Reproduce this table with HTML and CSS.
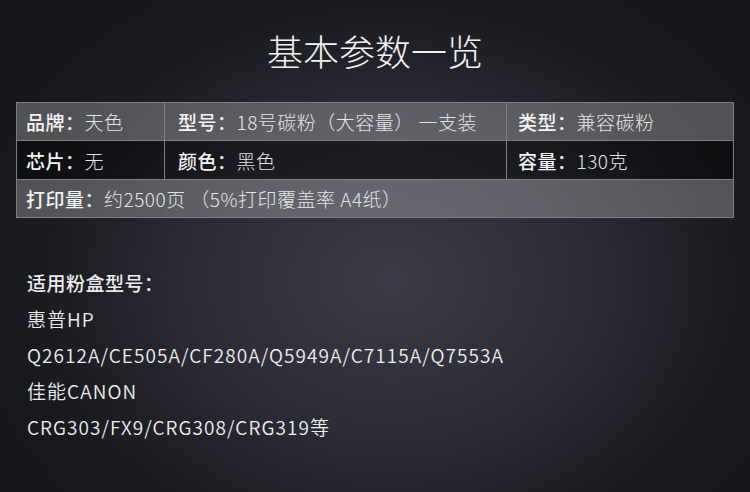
FILE: index.html
```html
<!DOCTYPE html>
<html lang="zh-CN">
<head>
<meta charset="utf-8">
<link rel="stylesheet" href="styles.css">
</head>
<body>
<div class="page">
  <h1 class="title">基本参数一览</h1>
  <div class="spec">
    <div class="cell c1 light"><b>品牌：</b>天色</div>
    <div class="cell c2 light"><b>型号：</b>18号碳粉（大容量） 一支装</div>
    <div class="cell c3 light"><b>类型：</b>兼容碳粉</div>
    <div class="cell c1 dark"><b>芯片：</b>无</div>
    <div class="cell c2 dark"><b>颜色：</b>黑色</div>
    <div class="cell c3 dark"><b>容量：</b>130克</div>
    <div class="cell full light"><b>打印量：</b>约2500页 （5%打印覆盖率 A4纸）</div>
  </div>
  <div class="models">
    <p class="head">适用粉盒型号：</p>
    <p>惠普HP</p>
    <p>Q2612A/CE505A/CF280A/Q5949A/C7115A/Q7553A</p>
    <p>佳能CANON</p>
    <p>CRG303/FX9/CRG308/CRG319等</p>
  </div>
</div>
</body>
</html>
```
FILE: styles.css
```css
html, body {
  margin: 0;
  padding: 0;
}
body {
  width: 750px;
  height: 492px;
  overflow: hidden;
  font-family: "Noto Sans CJK SC", "Noto Sans", sans-serif;
  color: #e6e6e6;
  background: radial-gradient(ellipse 430px 340px at 390px 280px, #3b3c47 0%, #2b2c35 45%, #1b1c21 80%, #16171b 100%);
}
.page {
  display: flex;
  flex-direction: column;
  width: 750px;
  height: 492px;
}
.title {
  margin: 30px 0 0;
  height: 40px;
  line-height: 40px;
  text-align: center;
  font-size: 36px;
  font-weight: 300;
  color: #f2f2f2;
}
.spec {
  margin: 32px 16px 0;
  display: grid;
  grid-template-columns: 148px 342px 1fr;
  grid-template-rows: 38px 39px 38px;
  border-top: 1px solid #7d7d84;
  border-left: 1px solid #7d7d84;
}
.cell {
  border-right: 1px solid #7d7d84;
  border-bottom: 1px solid #7d7d84;
  display: flex;
  align-items: center;
  font-size: 19px;
  font-weight: 300;
  letter-spacing: 0.5px;
  color: #e4e4e6;
  white-space: nowrap;
}
.cell b {
  font-weight: 500;
  color: #f4f4f4;
}
.light { background: rgba(255, 255, 255, 0.25); }
.dark { background: rgba(0, 0, 0, 0.38); }
.c1 { padding-left: 9px; }
.c2 { padding-left: 13px; }
.c3 { padding-left: 11px; }
.full {
  grid-column: 1 / 4;
  padding-left: 9px;
}
.models {
  margin: 47px 0 0 27px;
  font-size: 19px;
  font-weight: 350;
  letter-spacing: 1.05px;
  color: #ececec;
}
.models p {
  margin: 0;
  height: 36px;
  line-height: 36px;
}
.models .head {
  font-weight: 500;
  letter-spacing: 0.5px;
}
```
